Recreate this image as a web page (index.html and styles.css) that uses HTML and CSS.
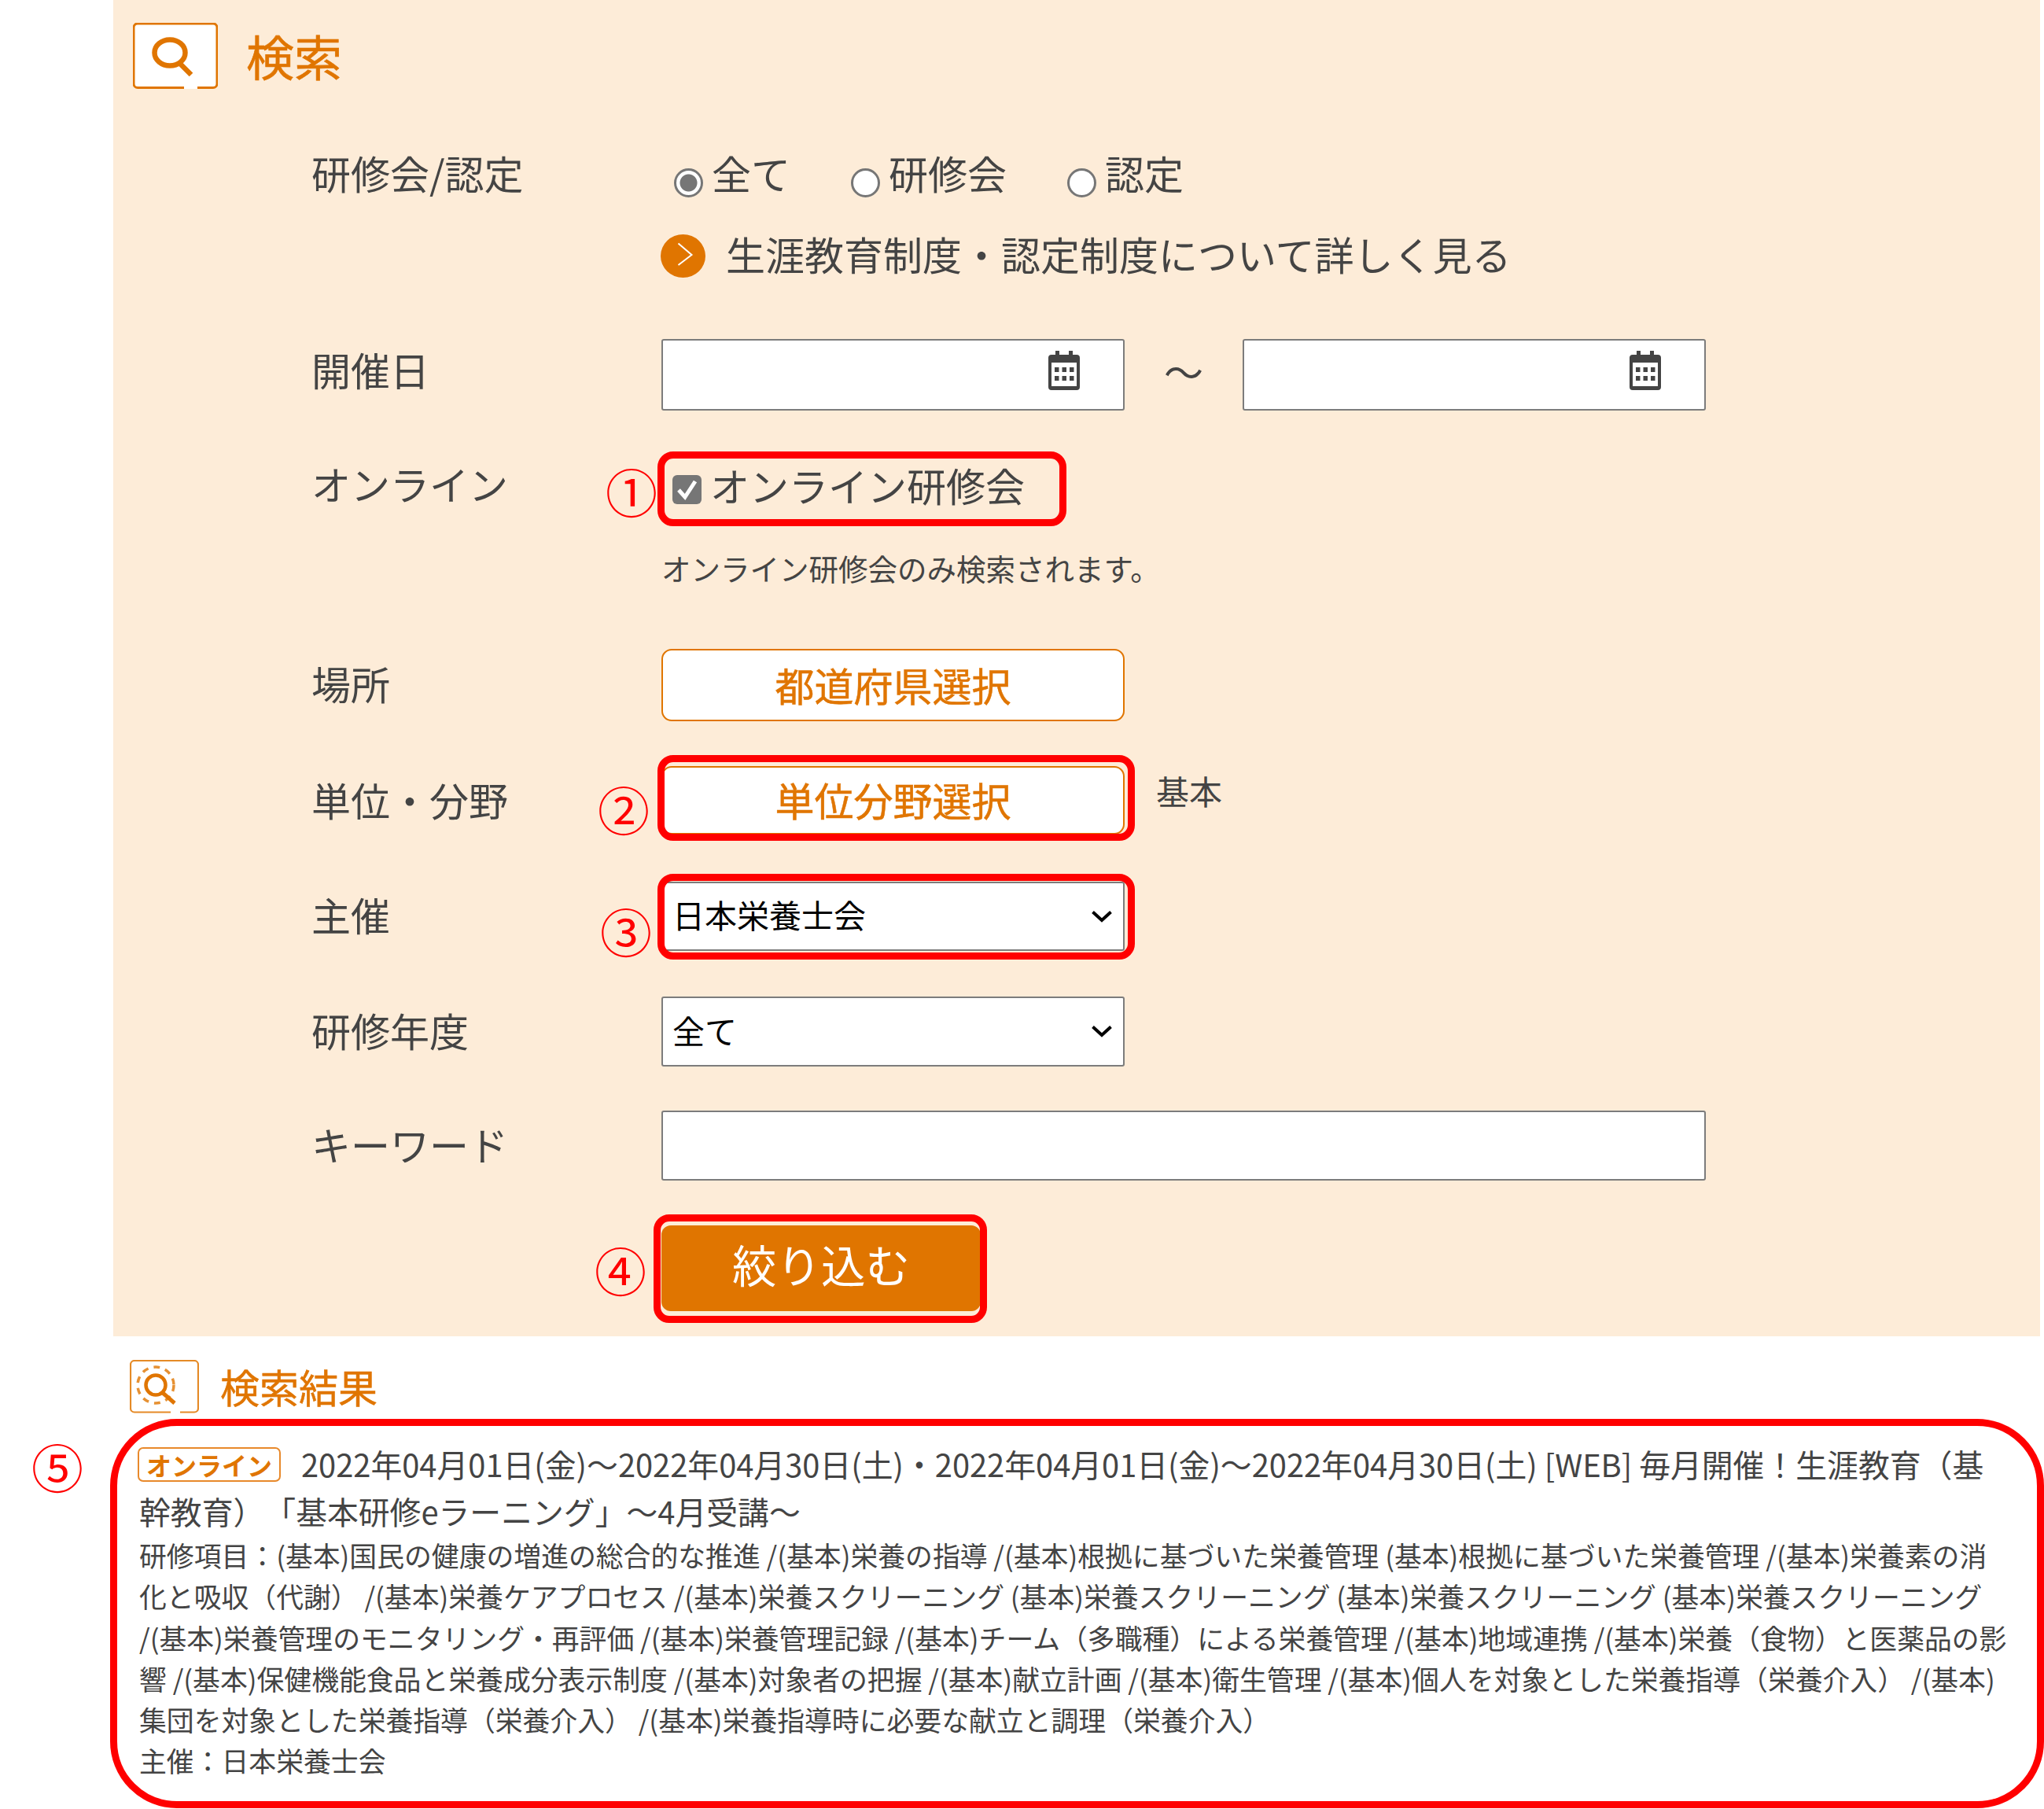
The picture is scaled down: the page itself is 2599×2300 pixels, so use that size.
FILE: index.html
```html
<!DOCTYPE html>
<html lang="ja">
<head>
<meta charset="utf-8">
<title>検索</title>
<link rel="stylesheet" href="styles.css">
</head>
<body>
<main class="page">
  <section class="panel">
    <header class="panel-head">
      <svg class="icon-search" width="108" height="84" viewBox="0 0 108 84" fill="none" stroke="#e07500">
        <path d="M65 82.500H6a5 5 0 0 1-5-5V6a5 5 0 0 1 5-5h96a5 5 0 0 1 5 5v71.500a5 5 0 0 1-5 5H82" stroke-width="3" fill="#fff"/>
        <path d="M65 82.500H82" stroke="#fff" stroke-width="3"/>
        <ellipse cx="47" cy="38" rx="19.500" ry="16.500" stroke-width="6.500"/>
        <path d="M60 52 74 66" stroke-width="6.500"/>
      </svg>
      <h2 class="panel-title">検索</h2>
    </header>

    <div class="row row-type">
      <div class="label">研修会/認定</div>
      <div class="field radios">
        <label class="radio"><input type="radio" name="type" checked><span>全て</span></label>
        <label class="radio"><input type="radio" name="type"><span>研修会</span></label>
        <label class="radio"><input type="radio" name="type"><span>認定</span></label>
      </div>
    </div>

    <div class="row row-link">
      <div class="label"></div>
      <a class="more" href="#">
        <svg class="more-icon" width="57" height="55" viewBox="0 0 57 55">
          <ellipse cx="28.500" cy="27.500" rx="28.500" ry="27.500" fill="#e07500"/>
          <path d="M22.500 11.500 39.500 26 22.500 39" fill="none" stroke="#fff" stroke-width="2"/>
        </svg>
        <span>生涯教育制度・認定制度について詳しく見る</span>
      </a>
    </div>

    <div class="row row-date">
      <div class="label">開催日</div>
      <div class="field dates">
        <div class="date">
          <input class="input" type="text">
          <svg class="cal" width="42" height="50" viewBox="0 0 42 50"><use href="#cal"/></svg>
        </div>
        <span class="tilde">～</span>
        <div class="date">
          <input class="input" type="text">
          <svg class="cal" width="42" height="50" viewBox="0 0 42 50"><use href="#cal"/></svg>
        </div>
      </div>
    </div>

    <div class="row row-online">
      <div class="label">オンライン</div>
      <div class="anno anno-online">
        <span class="num num-1">①</span>
        <span class="mark"></span>
        <label class="check"><input type="checkbox" checked><span>オンライン研修会</span></label>
      </div>
    </div>

    <div class="row row-note">
      <div class="label"></div>
      <p class="note">オンライン研修会のみ検索されます。</p>
    </div>

    <div class="row row-place">
      <div class="label">場所</div>
      <button class="pick" type="button">都道府県選択</button>
    </div>

    <div class="row row-unit">
      <div class="label">単位・分野</div>
      <div class="anno anno-unit">
        <span class="num num-2">②</span>
        <span class="mark"></span>
        <button class="pick" type="button">単位分野選択</button>
      </div>
      <span class="picked">基本</span>
    </div>

    <div class="row row-host">
      <div class="label">主催</div>
      <div class="anno anno-host">
        <span class="num num-3">③</span>
        <span class="mark"></span>
        <div class="select">
          <select><option>日本栄養士会</option></select>
          <svg class="chev" width="28" height="16" viewBox="0 0 28 16"><path d="M2.500 2.500 14 13 25.500 2.500" fill="none" stroke="#000" stroke-width="4"/></svg>
        </div>
      </div>
    </div>

    <div class="row row-year">
      <div class="label">研修年度</div>
      <div class="select">
        <select><option>全て</option></select>
        <svg class="chev" width="28" height="16" viewBox="0 0 28 16"><path d="M2.500 2.500 14 13 25.500 2.500" fill="none" stroke="#000" stroke-width="4"/></svg>
      </div>
    </div>

    <div class="row row-word">
      <div class="label">キーワード</div>
      <input class="input input-wide" type="text">
    </div>

    <div class="row row-submit">
      <div class="label"></div>
      <div class="anno anno-submit">
        <span class="num num-4">④</span>
        <span class="mark"></span>
        <button class="submit" type="button">絞り込む</button>
      </div>
    </div>
  </section>

  <header class="result-head">
    <svg class="icon-result" width="88" height="68" viewBox="0 0 88 68" fill="none" stroke="#e07500">
      <path d="M52 66.500H6a5 5 0 0 1-5-5V6a5 5 0 0 1 5-5h76a5 5 0 0 1 5 5v55.500a5 5 0 0 1-5 5H64" stroke-width="2.200" opacity=".85"/>
      <circle cx="33" cy="32" r="12.500" stroke-width="4.500"/>
      <circle cx="33" cy="32" r="23" stroke-width="3.500" stroke-dasharray="8 7" opacity=".8"/>
      <path d="M42 42 57 55" stroke-width="5"/>
    </svg>
    <h2 class="result-title">検索結果</h2>
  </header>

  <div class="result-wrap">
    <span class="num num-5">⑤</span>
    <article class="result">
      <div class="result-name">
        <span class="line line-first"><span class="badge">オンライン</span>2022年04月01日(金)～2022年04月30日(土)・2022年04月01日(金)～2022年04月30日(土) [WEB] 毎月開催！生涯教育（基</span>
        <span class="line">幹教育）「基本研修eラーニング」～4月受講～</span>
      </div>
      <div class="result-detail">
        <span class="line">研修項目：(基本)国民の健康の増進の総合的な推進 /(基本)栄養の指導 /(基本)根拠に基づいた栄養管理 (基本)根拠に基づいた栄養管理 /(基本)栄養素の消</span>
        <span class="line">化と吸収（代謝） /(基本)栄養ケアプロセス /(基本)栄養スクリーニング (基本)栄養スクリーニング (基本)栄養スクリーニング (基本)栄養スクリーニング</span>
        <span class="line">/(基本)栄養管理のモニタリング・再評価 /(基本)栄養管理記録 /(基本)チーム（多職種）による栄養管理 /(基本)地域連携 /(基本)栄養（食物）と医薬品の影</span>
        <span class="line">響 /(基本)保健機能食品と栄養成分表示制度 /(基本)対象者の把握 /(基本)献立計画 /(基本)衛生管理 /(基本)個人を対象とした栄養指導（栄養介入） /(基本)</span>
        <span class="line">集団を対象とした栄養指導（栄養介入） /(基本)栄養指導時に必要な献立と調理（栄養介入）</span>
        <span class="line">主催：日本栄養士会</span>
      </div>
    </article>
  </div>
</main>

<svg class="defs" width="0" height="0">
  <symbol id="cal" viewBox="0 0 42 50">
    <rect x="10" y="0" width="5" height="9" fill="#444"/>
    <rect x="27" y="0" width="5" height="9" fill="#444"/>
    <path d="M5 5h32a4 4 0 0 1 4 4v37a4 4 0 0 1-4 4H5a4 4 0 0 1-4-4V9a4 4 0 0 1 4-4zM5 15v30h32V15z" fill="#444" fill-rule="evenodd"/>
    <g fill="#444">
      <rect x="9" y="21" width="5.500" height="6"/><rect x="18.500" y="21" width="5.500" height="6"/><rect x="28" y="21" width="5.500" height="6"/>
      <rect x="9" y="32" width="5.500" height="6"/><rect x="18.500" y="32" width="5.500" height="6"/><rect x="28" y="32" width="5.500" height="6"/>
    </g>
  </symbol>
</svg>
</body>
</html>
```

FILE: styles.css
```css
* { box-sizing: border-box; }
html, body { margin: 0; padding: 0; background: #fff; }
body {
  font-family: "Noto Sans CJK JP", "Noto Sans", sans-serif;
  color: #444;
  width: 2599px;
  height: 2300px;
  overflow: hidden;
  text-spacing-trim: space-all;
}
.defs { position: absolute; }
.page { display: flex; flex-direction: column; }

.panel {
  margin-left: 144px;
  width: 2450px;
  height: 1699px;
  padding: 29px 0 0 25px;
  background: #fdecd8;
}
.panel-head { display: flex; align-items: center; gap: 36px; height: 84px; }
.panel-title {
  margin: 0;
  font-size: 61px;
  line-height: 84px;
  font-weight: 400;
  color: #e07500;
  -webkit-text-stroke: .6px #e07500;
}

.row { display: flex; align-items: center; }
.label {
  width: 445px;
  margin-left: 227px;
  padding-bottom: 6px;
  flex: none;
  font-size: 50px;
  line-height: 60px;
}

.row-type { margin-top: 85px; height: 52px; }
.row-link { margin-top: 48px; height: 55px; }
.row-date { margin-top: 78px; height: 91px; }
.row-online { margin-top: 62px; height: 70px; }
.row-note { margin-top: 44px; height: 50px; }
.row-place { margin-top: 77px; height: 92px; }
.row-unit { margin-top: 57px; height: 87px; }
.row-host { margin-top: 60px; height: 88px; }
.row-year { margin-top: 58px; height: 89px; }
.row-word { margin-top: 56px; height: 89px; }
.row-submit { margin-top: 57px; height: 109px; }

.row-type .label, .row-online .label { padding-bottom: 10px; }
.row-date .label { padding-bottom: 16px; }
.row-unit .label { padding-bottom: 4px; }

.radios {
  display: flex;
  font-size: 50px;
  line-height: 52px;
  padding-left: 16px;
  gap: 77px;
  margin-bottom: 10px;
}
.radio { display: flex; align-items: center; gap: 11px; }
.radio input {
  appearance: none;
  -webkit-appearance: none;
  flex: none;
  width: 37px;
  height: 37px;
  margin: 27px 0 0;
  border: 3px solid #767676;
  border-radius: 50%;
  background: #fff;
}
.radio input:checked {
  background: radial-gradient(circle closest-side, #767676 0 68%, #fff 74%);
}

.more { display: flex; align-items: center; gap: 26px; color: #444; text-decoration: none; font-size: 50px; line-height: 55px; }
.more span { padding-bottom: 6px; }
.more-icon { flex: none; margin-left: -1px; }

.dates { display: flex; align-items: center; }
.date { position: relative; width: 589px; height: 91px; }
.input {
  display: block;
  width: 100%;
  height: 100%;
  background: #fff;
  border: 2px solid #7c7c7c;
  border-radius: 3px;
  padding: 0 17px;
  outline: none;
}
.input-wide { width: 1328px; }
.cal { position: absolute; right: 56px; top: 15px; }
.tilde { width: 150px; padding-bottom: 12px; text-align: center; font-size: 50px; line-height: 60px; color: #444; }

.anno { position: relative; flex: none; }
.mark {
  position: absolute;
  border: 9px solid #f00;
  border-radius: 20px;
  pointer-events: none;
  z-index: 2;
}
.num {
  position: absolute;
  color: #f00;
  font-size: 66px;
  line-height: 60px;
  width: 60px;
  height: 60px;
  text-align: center;
}
.anno-online { width: 515px; height: 70px; }
.anno-online .mark { left: -5px; right: 0; top: -10px; bottom: -15px; }
.num-1 { left: -71px; top: 9px; }
.check { display: flex; align-items: center; height: 70px; font-size: 50px; line-height: 70px; }
.check span { padding-bottom: 6px; }
.check input {
  appearance: none;
  -webkit-appearance: none;
  flex: none;
  width: 37px;
  height: 37px;
  margin: 6px 11px 0 14px;
  border-radius: 6px;
  background: #767676 url("data:image/svg+xml,%3Csvg xmlns='http://www.w3.org/2000/svg' viewBox='0 0 37 37'%3E%3Cpath d='M8 19l8 9 13-20' fill='none' stroke='%23fff' stroke-width='5'/%3E%3C/svg%3E") center / 100% 100% no-repeat;
}

.note { margin: 0; padding-bottom: 3px; font-size: 37.500px; line-height: 50px; }

.pick {
  display: block;
  width: 589px;
  height: 100%;
  padding: 0 0 3px;
  background: #fff;
  border: 2.500px solid #e07500;
  border-radius: 13px;
  color: #e07500;
  font: inherit;
  font-size: 50px;
  line-height: 60px;
  -webkit-text-stroke: .5px #e07500;
}
.row-place .pick { height: 92px; }
.anno-unit { width: 589px; height: 87px; }
.anno-unit .mark { left: -5px; right: -13px; top: -14px; bottom: -8px; }
.num-2 { left: -81px; top: 23px; }
.picked { margin: 0 0 26px 40px; font-size: 42px; line-height: 56px; }

.select { position: relative; width: 589px; height: 89px; }
.anno-host .select { height: 88px; }
.select select {
  display: block;
  appearance: none;
  -webkit-appearance: none;
  width: 100%;
  height: 100%;
  background: #fff;
  border: 2px solid #7c7c7c;
  border-radius: 3px;
  padding: 0 0 6px 12px;
  font: inherit;
  font-size: 41px;
  color: #000;
  outline: none;
}
.chev { position: absolute; right: 15px; top: 36px; }
.anno-host { width: 589px; height: 88px; }
.anno-host .mark { left: -5px; right: -13px; top: -10px; bottom: -11px; }
.num-3 { left: -78px; top: 31px; }

.anno-submit { width: 406px; height: 109px; }
.anno-submit .mark { left: -10px; right: -8px; top: -14px; bottom: -15px; }
.num-4 { left: -85px; top: 25px; }
.submit {
  display: block;
  width: 100%;
  height: 100%;
  padding: 0 0 14px;
  background: #e07500;
  border: 0;
  border-radius: 12px;
  color: #fff;
  font: inherit;
  font-size: 56.500px;
}

.result-head { display: flex; align-items: center; gap: 27px; margin: 30px 0 0 165px; height: 68px; }
.result-title {
  margin: 0;
  padding-bottom: 2px;
  font-size: 50px;
  line-height: 68px;
  font-weight: 400;
  color: #e07500;
  -webkit-text-stroke: .5px #e07500;
}

.result-wrap { position: relative; margin: 7px 0 0 140px; width: 2459px; }
.num-5 { left: -100px; top: 29px; }
.result {
  border: 9px solid #f00;
  border-radius: 85px;
  padding: 19px 0 22px 28px;
  height: 495px;
}
.line { display: block; white-space: nowrap; }
.line-first { margin-bottom: 2px; }
.result-name { font-size: 39.850px; line-height: 58px; }
.result-detail { margin-top: 1px; font-size: 34.850px; line-height: 52.300px; }
.badge {
  display: inline-block;
  vertical-align: 2px;
  width: 182px;
  height: 44px;
  margin: 0 26px 0 -2px;
  border: 2px solid #e8892b;
  border-radius: 7px;
  background: #fff;
  color: #e07500;
  font-size: 32px;
  font-weight: 700;
  line-height: 40px;
  text-align: center;
}
```
